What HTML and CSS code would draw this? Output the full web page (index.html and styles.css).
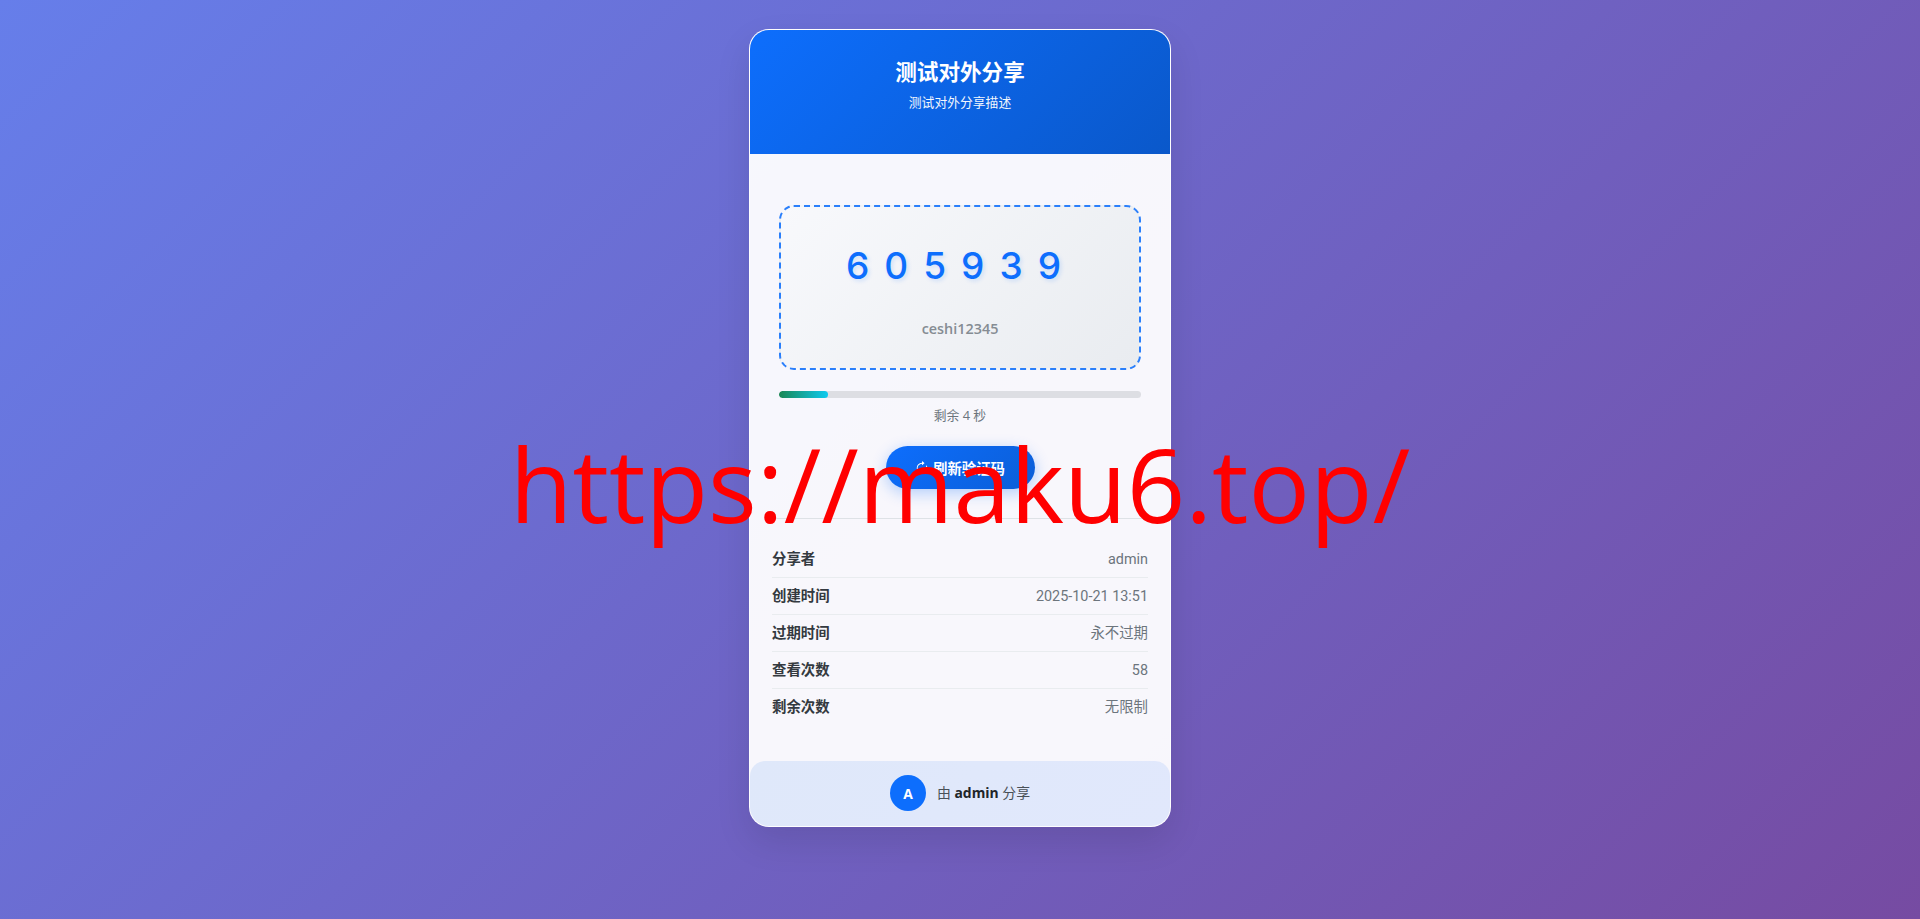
FILE: index.html
```html
<!DOCTYPE html>
<html lang="en">
<head>
    <meta charset="UTF-8">
    <meta name="viewport" content="width=device-width, initial-scale=1.0">
    <title>测试对外分享</title>
    <link rel="stylesheet" href="styles.css">
</head>
<body>
    <div class="watermark">https://maku6.top/</div>

    <section class="card">
        <header class="cardHeader">
            <h1>测试对外分享</h1>
            <p>测试对外分享描述</p>
        </header>

        <div class="cardBody">
            <div class="codeSection">
                <div class="codeBox">
                    <div class="codeDigits">605939</div>
                    <div class="codeName">ceshi12345</div>
                </div>
                <div class="progress"><div class="progressFill"></div></div>
                <p class="countdown">剩余 4 秒</p>
                <button class="refreshBtn" type="button">
                    <svg viewBox="0 0 16 16" width="14" height="14" fill="currentColor">
                        <path fill-rule="evenodd" d="M8 3a5 5 0 1 0 4.546 2.914.5.5 0 0 1 .908-.417A6 6 0 1 1 8 2v1z"/>
                        <path d="M8 4.466V.534a.25.25 0 0 1 .41-.192l2.36 1.966c.12.1.12.284 0 .384L8.41 4.658A.25.25 0 0 1 8 4.466z"/>
                    </svg>
                    刷新验证码
                </button>
            </div>

            <div class="infoList">
                <div class="infoRow"><span class="infoLabel">分享者</span><span class="infoValue latin">admin</span></div>
                <div class="infoRow"><span class="infoLabel">创建时间</span><span class="infoValue latin">2025-10-21 13:51</span></div>
                <div class="infoRow"><span class="infoLabel">过期时间</span><span class="infoValue">永不过期</span></div>
                <div class="infoRow"><span class="infoLabel">查看次数</span><span class="infoValue latin">58</span></div>
                <div class="infoRow"><span class="infoLabel">剩余次数</span><span class="infoValue">无限制</span></div>
            </div>
        </div>

        <footer class="cardFooter">
            <div class="avatar">A</div>
            <span class="sharedBy">由 <b>admin</b> 分享</span>
        </footer>
    </section>
</body>
</html>
```

FILE: styles.css
```css
*{
    box-sizing: border-box;
}
html, body{
    height: 100%;
}
body{
    margin: 0;
    padding-top: 29px;
    display: flex;
    justify-content: center;
    align-items: flex-start;
    overflow: hidden;
    background: linear-gradient(135deg, #667eea 0%, #764ba2 100%);
    font-family: "Open Sans", "Noto Sans CJK SC", sans-serif;
    color: #212529;
}
.watermark{
    position: absolute;
    top: 414px;
    left: 0;
    width: 100%;
    text-align: center;
    font-size: 102.3px;
    line-height: 140px;
    color: #ff0000;
    z-index: 5;
    white-space: nowrap;
}
.card{
    width: 422px;
    height: 798px;
    display: flex;
    flex-direction: column;
    background: rgba(255, 255, 255, 0.95);
    border: 1px solid rgba(255, 255, 255, 0.8);
    border-radius: 20px;
    box-shadow: 0 15px 35px rgba(0, 0, 0, 0.1);
    overflow: hidden;
}
.cardHeader{
    height: 124px;
    padding-top: 26px;
    text-align: center;
    color: #fff;
    background: linear-gradient(135deg, #0d6efd 0%, #0a58ca 100%);
}
.cardHeader h1{
    margin: 0;
    font-size: 21.6px;
    line-height: 32px;
    font-weight: 700;
}
.cardHeader p{
    margin: 5px 0 0;
    font-size: 12.8px;
    line-height: 19px;
    opacity: 0.95;
}
.cardBody{
    flex: 1;
    padding: 51px 22px 0;
}
.codeSection{
    padding: 0 7px;
    text-align: center;
}
.codeBox{
    height: 165px;
    padding-top: 36px;
    border: 2px dashed #2a7ffb;
    border-radius: 15px;
    background: linear-gradient(135deg, #f8f9fc 0%, #e9ecf0 100%);
}
.codeDigits{
    font-family: "Inter", sans-serif;
    font-size: 37px;
    line-height: 45px;
    font-weight: 550;
    letter-spacing: 15px;
    padding-left: 2px;
    color: #0d6efd;
    text-shadow: 2px 2px 4px rgba(13, 110, 253, 0.15);
}
.codeName{
    margin-top: 31px;
    font-size: 14.4px;
    line-height: 20px;
    font-weight: 600;
    color: #858c93;
}
.progress{
    height: 7px;
    margin-top: 21px;
    border-radius: 4px;
    background: #dddee3;
    overflow: hidden;
}
.progressFill{
    width: 13.4%;
    height: 100%;
    border-radius: 4px;
    background: linear-gradient(90deg, #198754, #0dcaf0);
}
.countdown{
    margin: 8px 0 0;
    font-size: 12.8px;
    line-height: 19px;
    color: #6c757d;
}
.refreshBtn{
    width: 149px;
    height: 43px;
    margin-top: 21px;
    display: inline-flex;
    align-items: center;
    justify-content: center;
    gap: 4px;
    border: 0;
    border-radius: 25px;
    color: #fff;
    font-family: inherit;
    font-size: 14.4px;
    font-weight: 700;
    background: linear-gradient(135deg, #0d6efd 0%, #0b5ed7 100%);
    box-shadow: 0 4px 15px rgba(13, 110, 253, 0.3);
}
.infoList{
    margin-top: 29px;
    padding-top: 22px;
    border-top: 1px solid #dee2e6;
}
.infoRow{
    height: 37px;
    padding-bottom: 4px;
    display: flex;
    justify-content: space-between;
    align-items: center;
    font-size: 14.4px;
    border-bottom: 1px solid #e9ecef;
}
.infoRow:last-child{
    border-bottom: 0;
}
.infoLabel{
    font-weight: 700;
    color: #343a40;
}
.infoValue{
    font-family: "Roboto", "Noto Sans CJK SC", sans-serif;
    color: #6c757d;
}
.latin{
    padding-top: 4px;
}
.cardFooter{
    height: 65px;
    padding-bottom: 1px;
    display: flex;
    align-items: center;
    justify-content: center;
    gap: 11px;
    border-radius: 15px 15px 0 0;
    font-size: 13.9px;
    color: #495057;
    background: linear-gradient(135deg, #dfe8fa 0%, #e1e8fc 100%);
}
.sharedBy{
    padding-bottom: 2px;
}
.cardFooter b{
    color: #212529;
}
.avatar{
    width: 36px;
    height: 36px;
    display: flex;
    align-items: center;
    justify-content: center;
    border-radius: 50%;
    color: #fff;
    font-weight: 700;
    background: #0d6efd;
}
```
